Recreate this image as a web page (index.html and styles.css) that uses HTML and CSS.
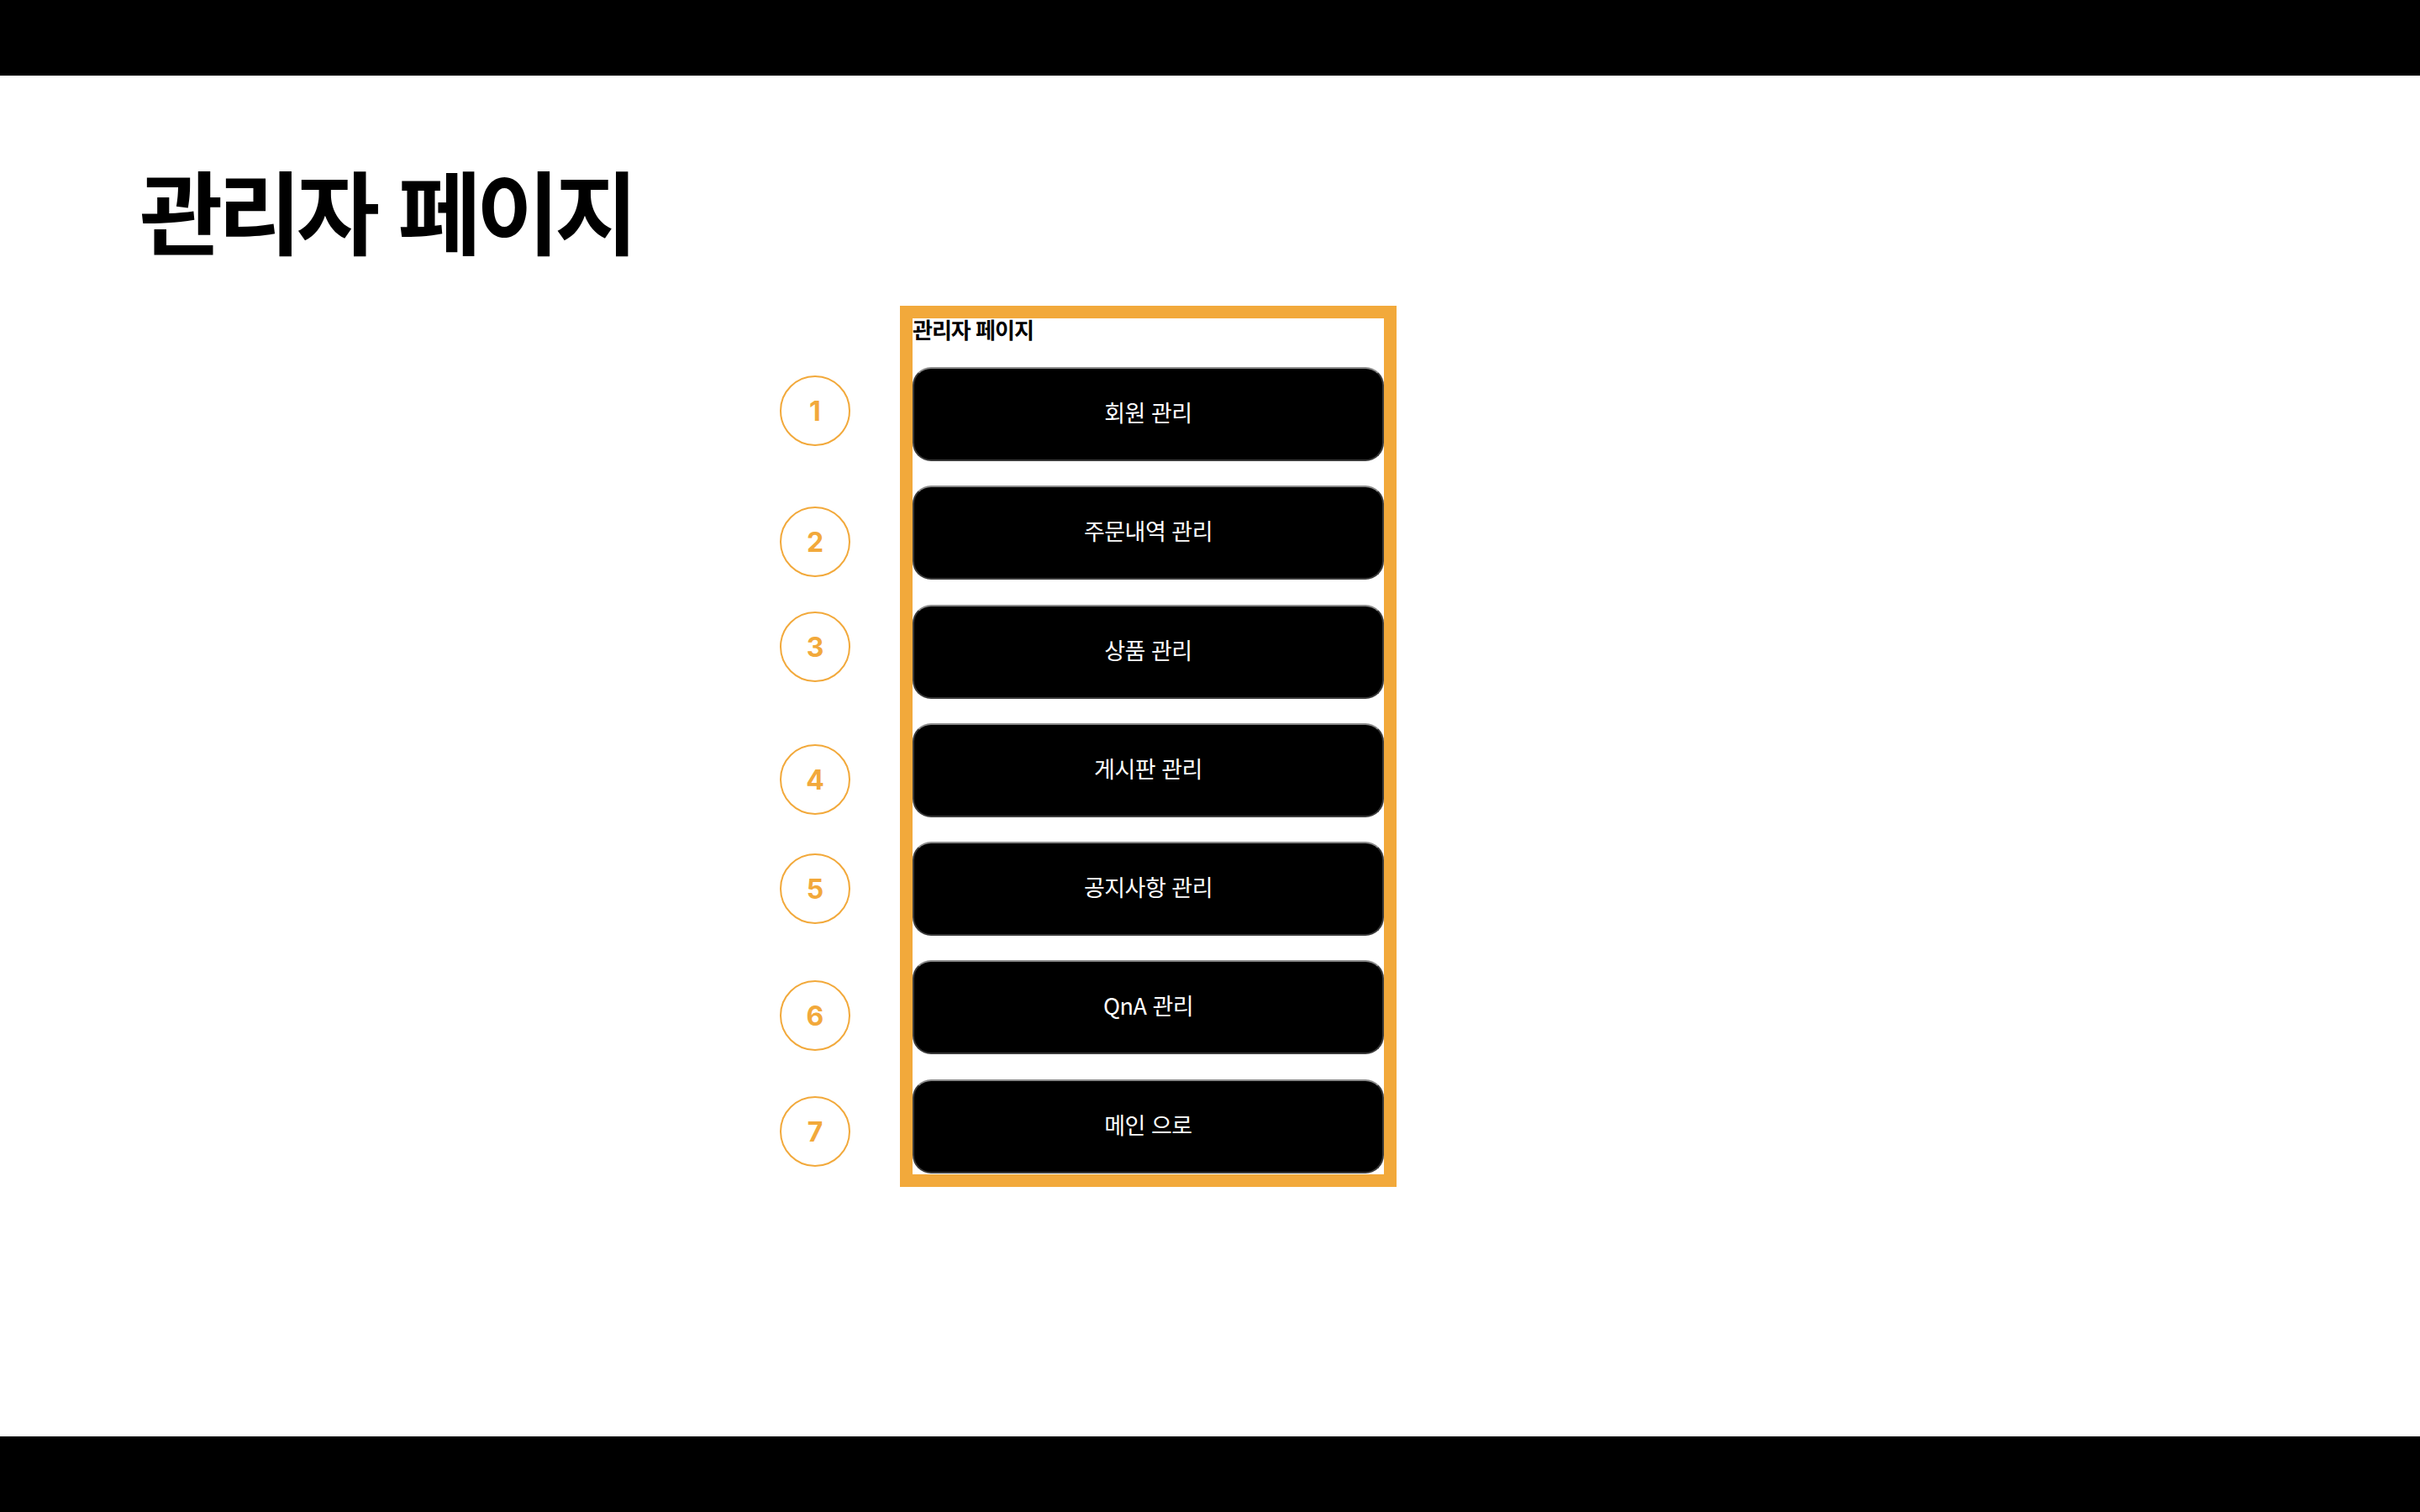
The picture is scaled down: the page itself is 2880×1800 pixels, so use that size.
FILE: index.html
```html
<!DOCTYPE html>
<html lang="ko">
<head>
<meta charset="utf-8">
<title>관리자 페이지</title>
<link rel="stylesheet" href="styles.css">
</head>
<body>
<div class="slide">
  <div class="bar"></div>
  <main class="content">
    <h1 class="title">관리자 페이지</h1>
    <div class="figure">
      <div class="markers">
        <span class="marker m1">1</span>
        <span class="marker m2">2</span>
        <span class="marker m3">3</span>
        <span class="marker m4">4</span>
        <span class="marker m5">5</span>
        <span class="marker m6">6</span>
        <span class="marker m7">7</span>
      </div>
      <div class="frame">
        <div class="screen">
          <h2 class="screen-title">관리자 페이지</h2>
          <div class="menu">
            <button class="menu-btn">회원 관리</button>
            <button class="menu-btn">주문내역 관리</button>
            <button class="menu-btn">상품 관리</button>
            <button class="menu-btn">게시판 관리</button>
            <button class="menu-btn">공지사항 관리</button>
            <button class="menu-btn">QnA 관리</button>
            <button class="menu-btn">메인 으로</button>
          </div>
        </div>
      </div>
    </div>
  </main>
  <div class="bar"></div>
</div>
</body>
</html>
```
FILE: styles.css
```css
html, body {
  margin: 0;
  padding: 0;
  background: #ffffff;
}
body {
  font-family: "Noto Sans CJK KR", "Noto Sans", sans-serif;
}
.slide {
  width: 2880px;
  height: 1800px;
  display: flex;
  flex-direction: column;
}
.bar {
  height: 90px;
  background: #000;
  flex: none;
}
.content {
  flex: 1;
  padding: 104px 0 0 166px;
  box-sizing: border-box;
}
.title {
  margin: 0;
  font-size: 108px;
  line-height: 1;
  font-weight: 700;
  letter-spacing: -6px;
  word-spacing: 3px;
  color: #000;
}
.figure {
  display: flex;
  margin-top: 62px;
  margin-left: 762px;
  gap: 59px;
}
.markers {
  position: relative;
  width: 84px;
  flex: none;
}
.marker {
  position: absolute;
  left: 0;
  width: 84px;
  height: 84px;
  box-sizing: border-box;
  border: 2px solid #f2a93b;
  border-radius: 50%;
  display: flex;
  align-items: center;
  justify-content: center;
  font-family: Inter, "Noto Sans", sans-serif;
  font-weight: 700;
  font-size: 32px;
  color: #f2a93b;
}
.m1 { top: 83px; }
.m2 { top: 239px; }
.m3 { top: 364px; }
.m4 { top: 522px; }
.m5 { top: 652px; }
.m6 { top: 803px; }
.m7 { top: 941px; }
.frame {
  border: 15px solid #f2a93b;
  width: 561px;
  height: 1019px;
  flex: none;
  background: #fff;
}
.screen {
  display: flex;
  flex-direction: column;
  height: 100%;
}
.screen-title {
  margin: 0;
  font-size: 26px;
  line-height: 1;
  font-weight: 700;
  color: #000;
  letter-spacing: -1px;
}
.menu {
  display: flex;
  flex-direction: column;
  gap: 29.3px;
  margin-top: 32px;
}
.menu-btn {
  height: 112px;
  width: 561px;
  margin: 0;
  background: #000;
  color: #fff;
  border: 2px solid #3a3a3a;
  border-top-color: #8a8a8a;
  border-radius: 22px;
  font-family: "Noto Sans CJK KR", "Noto Sans", sans-serif;
  font-size: 27px;
  font-weight: 400;
  letter-spacing: -0.5px;
  padding: 0 0 5px 0;
}
```
